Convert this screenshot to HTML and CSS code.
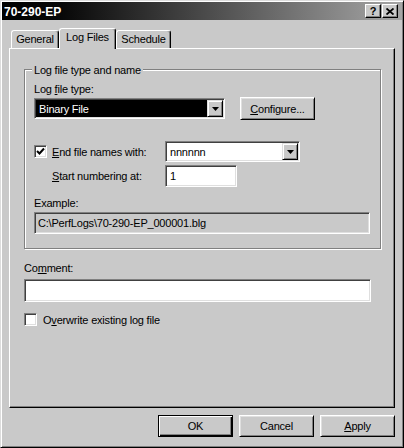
FILE: index.html
```html
<!DOCTYPE html>
<html>
<head>
<meta charset="utf-8">
<title>70-290-EP</title>
<link rel="stylesheet" href="styles.css">
</head>
<body>
<div class="window">
  <div class="titlebar">
    <span class="title">70-290-EP</span>
    <div class="tb-buttons">
      <span class="tb-btn tb-help">?</span>
      <span class="tb-btn"><svg width="8" height="7" viewBox="0 0 8 7"><path d="M0.5 0.5 L7.5 6.5 M7.5 0.5 L0.5 6.5" stroke="#000" stroke-width="1.8" fill="none"/></svg></span>
    </div>
  </div>
  <div class="content">
    <div class="tabs">
      <div class="tab tab-general">General</div>
      <div class="tab tab-log active">Log Files</div>
      <div class="tab tab-sched">Schedule</div>
    </div>
    <div class="panel">
      <div class="group">
        <span class="group-title">Log file type and name</span>
        <div class="label">Log <u>f</u>ile type:</div>
        <div class="row row-type">
          <div class="select">
            <span class="sel-text dark">Binary File</span>
            <span class="arrow-btn"><svg width="7" height="4" viewBox="0 0 7 4"><polygon points="0,0 7,0 3.5,4" fill="#000"/></svg></span>
          </div>
          <span class="btn btn-config"><u>C</u>onfigure...</span>
        </div>
        <div class="row row-end">
          <div class="lead">
            <span class="check"><svg width="9" height="9" viewBox="0 0 9 9"><polyline points="1,4 3.5,6.5 8,1.5" fill="none" stroke="#000" stroke-width="2"/></svg></span>
            <span><u>E</u>nd file names with:</span>
          </div>
          <div class="select combo">
            <span class="sel-text">nnnnnn</span>
            <span class="arrow-btn"><svg width="7" height="4" viewBox="0 0 7 4"><polygon points="0,0 7,0 3.5,4" fill="#000"/></svg></span>
          </div>
        </div>
        <div class="row row-start">
          <div class="lead indent"><span><u>S</u>tart numbering at:</span></div>
          <div class="field input-num">1</div>
        </div>
        <div class="label example-label">Example:</div>
        <div class="field example">C:\PerfLogs\70-290-EP_000001.blg</div>
      </div>
      <div class="label comment-label">Co<u>m</u>ment:</div>
      <div class="field comment"></div>
      <div class="row overwrite">
        <span class="check empty"></span>
        <span>O<u>v</u>erwrite existing log file</span>
      </div>
    </div>
    <div class="footer">
      <span class="btn btn-default">OK</span>
      <span class="btn">Cancel</span>
      <span class="btn"><u>A</u>pply</span>
    </div>
  </div>
</div>
</body>
</html>
```
FILE: styles.css
```css
* { box-sizing: border-box; }

body {
  margin: 0;
  background: #c9c9c9;
  font-family: "Liberation Sans", Arial, sans-serif;
  font-size: 11px;
  letter-spacing: -0.2px;
  color: #000;
}

u { text-underline-offset: 1px; }

.window {
  width: 404px;
  height: 448px;
  border: 1px solid;
  border-color: #dcdcdc #000 #000 #dcdcdc;
  box-shadow: inset 1px 1px #fff, inset -1px -1px #808080;
  padding: 1px;
  display: flex;
  flex-direction: column;
  background: #c9c9c9;
}

.titlebar {
  height: 18px;
  flex: none;
  display: flex;
  align-items: center;
  justify-content: space-between;
  padding: 0 4px 0 2px;
  background: linear-gradient(90deg, #000 0%, #080808 15%, #a6a6a6 100%);
}

.title {
  color: #fff;
  font-weight: bold;
  font-size: 12px;
  letter-spacing: 0;
  padding-top: 1px;
}

.tb-buttons {
  display: flex;
  gap: 1px;
}

.tb-btn {
  width: 16px;
  height: 14px;
  display: flex;
  align-items: center;
  justify-content: center;
  background: #c9c9c9;
  border: 1px solid;
  border-color: #fff #000 #000 #fff;
  box-shadow: inset -1px -1px #808080;
  font-weight: bold;
  font-size: 11px;
  line-height: 11px;
}

.content {
  flex: 1;
  display: flex;
  flex-direction: column;
  padding: 8px 7px 9px;
}

.tabs {
  height: 20px;
  flex: none;
  display: flex;
  align-items: flex-end;
  padding-left: 2px;
}

.tab {
  height: 18px;
  border: 1px solid;
  border-bottom: 0;
  border-color: #fff #000 #000 #fff;
  border-radius: 3px 3px 0 0;
  box-shadow: inset -1px 0 #808080;
  display: flex;
  justify-content: center;
  padding-top: 2px;
  line-height: 13px;
}

.tab-general { width: 48px; }
.tab-log { width: 57px; }
.tab-sched { width: 55px; }

.tab.active {
  height: 21px;
  margin-bottom: -1px;
  position: relative;
  z-index: 1;
  background: #c9c9c9;
}

.panel {
  height: 360px;
  flex: none;
  border: 1px solid;
  border-color: #fff #000 #000 #fff;
  box-shadow: inset -1px -1px #808080;
  padding: 20px 13px 0 14px;
}

.group {
  position: relative;
  border: 1px solid #808080;
  box-shadow: inset 1px 1px #fff, 1px 1px #fff;
  padding: 13px 10px 14px 9px;
}

.group-title {
  position: absolute;
  top: -6px;
  left: 7px;
  padding: 0 2px;
  background: #c9c9c9;
  line-height: 13px;
}

.label { line-height: 13px; }

.row {
  display: flex;
  align-items: center;
}

.row-type {
  margin-top: 1px;
  height: 23px;
}

.select {
  width: 191px;
  height: 21px;
  flex: none;
  display: flex;
  border: 1px solid;
  border-color: #808080 #fff #fff #808080;
  box-shadow: inset 1px 1px #404040, inset -1px -1px #dfdfdf;
  padding: 1px;
  background: #fff;
}

.sel-text {
  flex: 1;
  display: flex;
  align-items: center;
  padding-left: 3px;
}

.sel-text.dark {
  background: #000;
  color: #fff;
}

.arrow-btn {
  width: 16px;
  flex: none;
  display: flex;
  align-items: center;
  justify-content: center;
  background: #c9c9c9;
  border: 1px solid;
  border-color: #dfdfdf #000 #000 #dfdfdf;
  box-shadow: inset 1px 1px #fff, inset -1px -1px #808080;
}

.btn {
  width: 75px;
  height: 22px;
  flex: none;
  display: flex;
  align-items: center;
  justify-content: center;
  background: #c9c9c9;
  border: 1px solid;
  border-color: #fff #000 #000 #fff;
  box-shadow: inset 1px 1px #dfdfdf, inset -1px -1px #808080;
}

.btn-config {
  height: 23px;
  margin-left: 15px;
}

.btn-default {
  border-color: #000;
  box-shadow: inset 1px 1px #fff, inset -1px -1px #000, inset -2px -2px #808080;
}

.row-end {
  margin-top: 21px;
  height: 21px;
}

.lead {
  width: 131px;
  flex: none;
  display: flex;
  align-items: center;
}

.lead.indent { padding-left: 18px; }

.check {
  width: 13px;
  height: 13px;
  flex: none;
  display: flex;
  align-items: center;
  justify-content: center;
  background: #fff;
  border: 1px solid;
  border-color: #808080 #fff #fff #808080;
  box-shadow: inset 1px 1px #404040, inset -1px -1px #dfdfdf;
  margin-right: 5px;
}

.combo { width: 135px; }

.field {
  display: flex;
  align-items: center;
  background: #fff;
  border: 1px solid;
  border-color: #808080 #fff #fff #808080;
  box-shadow: inset 1px 1px #404040, inset -1px -1px #dfdfdf;
  padding-left: 4px;
}

.row-start {
  margin-top: 3px;
  height: 22px;
}

.input-num {
  width: 72px;
  height: 22px;
}

.example-label { margin-top: 10px; }

.example {
  margin-top: 2px;
  width: 336px;
  height: 22px;
  background: #c9c9c9;
  padding-left: 3px;
}

.comment-label { margin-top: 13px; }

.comment {
  margin-top: 4px;
  width: 347px;
  height: 23px;
}

.overwrite {
  margin-top: 11px;
  height: 13px;
}

.overwrite .check { margin-right: 6px; }

.footer {
  margin-top: 7px;
  display: flex;
  justify-content: flex-end;
  gap: 6px;
}
```
